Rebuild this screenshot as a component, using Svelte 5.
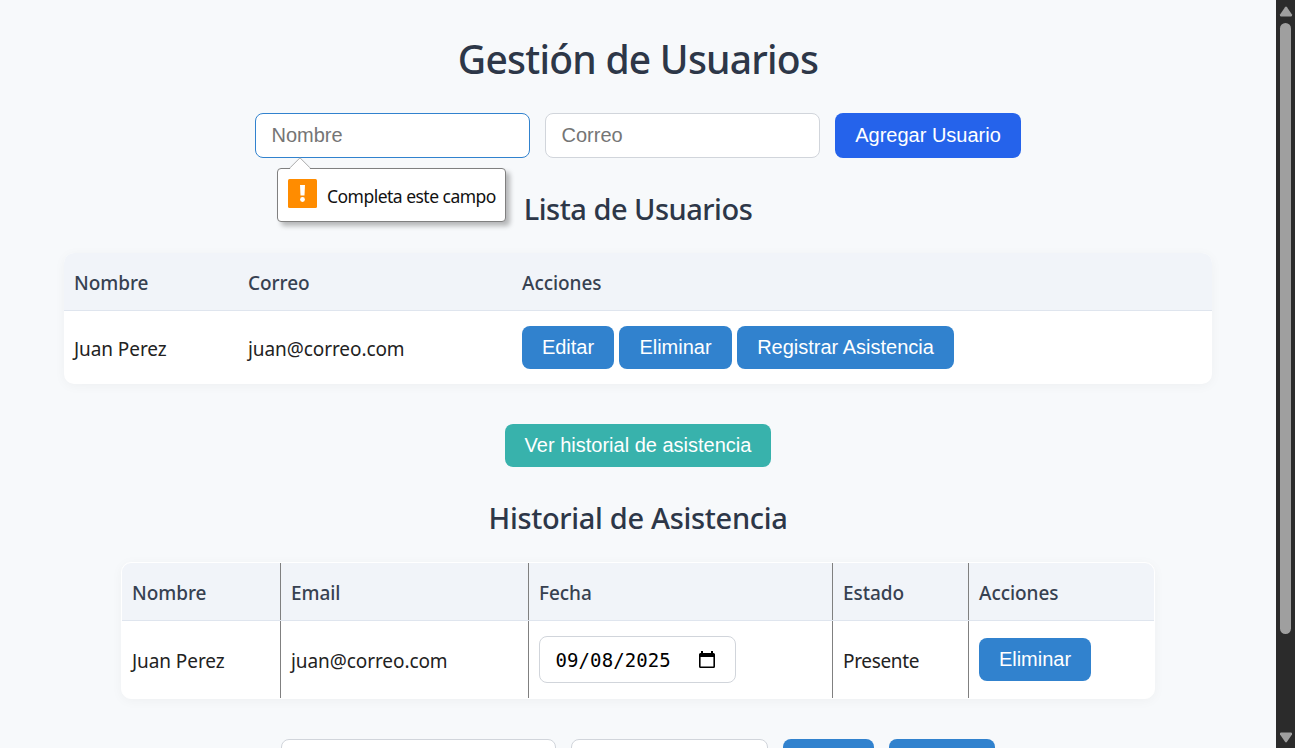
<script>
  const users = [{ name: 'Juan Perez', email: 'juan@correo.com' }];
  const records = [{ name: 'Juan Perez', email: 'juan@correo.com', date: '09/08/2025', status: 'Presente' }];
</script>

<div class="window">
  <main>
    <h1><span>Gestión de Usuarios</span></h1>

    <form class="user-form" novalidate>
      <div class="field">
        <input class="active" type="text" placeholder="Nombre" />
        <div class="bubble" role="alert">
          <svg class="pointer" width="22" height="12" viewBox="0 0 22 12">
            <path d="M1 11.5 L11 1 L21 11.5 V12 H1Z" fill="#fff" />
            <path d="M1 10.8 L11 .8 L21 10.8" fill="none" stroke="#aaa" />
          </svg>
          <svg class="warn" width="29" height="29" viewBox="0 0 29 29">
            <rect width="29" height="29" rx="1.5" fill="#ff8c00" />
            <path d="M12 6h5l-.5 10.5h-4z" fill="#fff" />
            <circle cx="14.5" cy="20.5" r="2.4" fill="#fff" />
          </svg>
          <span>Completa este campo</span>
        </div>
      </div>
      <input type="email" placeholder="Correo" />
      <button class="primary" type="button">Agregar Usuario</button>
    </form>

    <h2 class="list-title"><span>Lista de Usuarios</span></h2>

    <section class="table users">
      <div class="row head">
        <div><span>Nombre</span></div><div><span>Correo</span></div><div><span>Acciones</span></div>
      </div>
      {#each users as user}
        <div class="row">
          <div><span>{user.name}</span></div>
          <div><span>{user.email}</span></div>
          <div class="actions">
            <button class="w92">Editar</button>
            <button class="w113">Eliminar</button>
            <button class="w217">Registrar Asistencia</button>
          </div>
        </div>
      {/each}
    </section>

    <button class="teal">Ver historial de asistencia</button>

    <h2 class="history-title"><span>Historial de Asistencia</span></h2>

    <section class="table history">
      <div class="row head">
        <div><span>Nombre</span></div><div><span>Email</span></div><div><span>Fecha</span></div><div><span>Estado</span></div><div><span>Acciones</span></div>
      </div>
      {#each records as record}
        <div class="row">
          <div><span>{record.name}</span></div>
          <div><span>{record.email}</span></div>
          <div>
            <div class="date">
              <span>{record.date}</span>
              <svg width="18" height="19" viewBox="0 0 18 19">
                <path d="M3 1h2v2h8V1h2v2h.5A1.5 1.5 0 0 1 17 4.500V16.500A1.500 1.500 0 0 1 15.500 18H2.500A1.500 1.500 0 0 1 1 16.500V4.500A1.500 1.500 0 0 1 2.500 3H3zM2.600 7v9.500h12.800V7z" fill="#000" fill-rule="evenodd" />
              </svg>
            </div>
          </div>
          <div><span class="status">{record.status}</span></div>
          <div class="actions"><button class="w112">Eliminar</button></div>
        </div>
      {/each}
    </section>

    <div class="filters">
      <input class="f-name" type="text" />
      <input class="f-date" type="text" />
      <button class="f-one" aria-label="Filtrar"></button>
      <button class="f-two" aria-label="Limpiar"></button>
    </div>
  </main>

  <aside class="scrollbar">
    <svg width="14" height="11" viewBox="0 0 14 11"><path d="M6 1.200Q7 0 8 1.200L13 8.500Q13.500 10.500 12 10.500H2Q.5 10.500 1 8.500Z" fill="#9f9f9f" /></svg>
    <div class="thumb"></div>
    <svg class="down" width="14" height="11" viewBox="0 0 14 11"><path d="M6 1.200Q7 0 8 1.200L13 8.500Q13.500 10.500 12 10.500H2Q.5 10.500 1 8.500Z" fill="#9f9f9f" /></svg>
  </aside>
</div>

<style>
  :global(body) { margin: 0; background: #f7f9fb; overflow: hidden; }
  * { box-sizing: border-box; }
  .window { display: grid; grid-template-columns: 1276px 19px; height: 748px; overflow: hidden; font-family: 'Noto Sans', sans-serif; font-size: 19px; color: #222; }
  main { display: flex; flex-direction: column; align-items: center; background: #f7f9fb; height: 748px; overflow: hidden; }
  span { white-space: nowrap; }
  h1, h2 { margin: 0; font-weight: 550; color: #2d3748; flex: none; }
  h1 { font-size: 39px; line-height: 54px; height: 54px; margin-top: 32px; letter-spacing: -.75px; }
  h2 { font-size: 29px; line-height: 40px; height: 40px; }
  .user-form { display: flex; gap: 15px; height: 45px; margin-top: 27px; flex: none; }
  .field { position: relative; display: flex; }
  input { width: 275px; height: 45px; padding: 0 15px 0 15.500px; border: 1px solid #d1d5db; border-radius: 8px; background: #fff; font: 20px 'Liberation Sans', sans-serif; outline: none; }
  input::placeholder { color: #757575; opacity: 1; }
  input.active { border-color: #3182ce; }
  button { flex: none; height: 43px; padding: 0 0 1px; border: 0; border-radius: 8px; background: #3182ce; color: #fff; font: 20px 'Liberation Sans', sans-serif; white-space: nowrap; }
  .primary { width: 186px; height: 45px; background: #2563eb; padding-bottom: 0; }
  .bubble { position: absolute; z-index: 2; left: 22px; top: 55px; width: 229px; height: 54px; display: flex; align-items: center; gap: 10px; padding: 0 0 3px 10px; background: #fff; border: 1px solid #808080; border-radius: 4px; box-shadow: 4px 4px 5px rgba(0, 0, 0, .27); color: #111; font-size: 17.500px; }
  .pointer { position: absolute; left: 11px; top: -12px; }
  .warn { flex: none; }
  .bubble span { letter-spacing: -.52px; padding-top: 4px; }
  .list-title { margin-top: 31px; letter-spacing: -.5px; }
  .table { flex: none; background: #fff; border-radius: 10px; box-shadow: 0 2px 12px rgba(0, 0, 0, .04); overflow: hidden; }
  .row { display: grid; }
  .row > div { display: flex; align-items: center; padding-left: 10px; }
  .head { height: 58px; background: #f1f4f9; border-bottom: 1px solid #dfe5ee; color: #374151; font-weight: 550; letter-spacing: -.05px; }
  .users { width: 1148px; height: 131px; margin-top: 24px; }
  .users .row { grid-template-columns: 174px 274px 1fr; }
  .users .row:not(.head) { height: 73px; }
  .head span { padding-top: 3px; }
  .row:not(.head) > div > span { padding-top: 3px; letter-spacing: -.08px; }
  .row:not(.head) > div > .status { letter-spacing: -.35px; }
  .actions { gap: 5px; }
  .w92 { width: 92px; } .w113 { width: 113px; } .w217 { width: 217px; } .w112 { width: 112px; }
  .teal { width: 266px; background: #38b2ac; margin-top: 40px; }
  .history-title { margin-top: 31px; letter-spacing: -.32px; }
  .history { width: 1034px; height: 137px; margin-top: 24px; border: 1px solid #fff; }
  .history .row { grid-template-columns: 159px 248px 304px 136px 1fr; }
  .history .row:not(.head) { height: 77px; }
  .history .row > div:not(:last-child) { border-right: 1px solid #808080; }
  .date { display: flex; align-items: center; justify-content: space-between; width: 197px; height: 47px; padding: 0 19px 0 15.500px; border: 1px solid #d1d5db; border-radius: 8px; color: #000; font: 19px 'DejaVu Sans Mono', monospace; letter-spacing: .1px; }
  .filters { display: flex; margin-top: 40px; flex: none; }
  .f-date { width: 197px; margin: 0 15px; }
  .f-one { width: 91px; } .f-two { width: 106px; margin-left: 15px; }
  .filters button { height: 45px; }
  .scrollbar { display: flex; flex-direction: column; align-items: center; background: #2b2b2b; padding: 6px 0 5px; }
  .scrollbar svg { flex: none; }
  .thumb { width: 11px; height: 611px; margin-top: 6px; border-radius: 6px; background: #9f9f9f; }
  .down { margin-top: auto; transform: rotate(180deg); }
</style>
